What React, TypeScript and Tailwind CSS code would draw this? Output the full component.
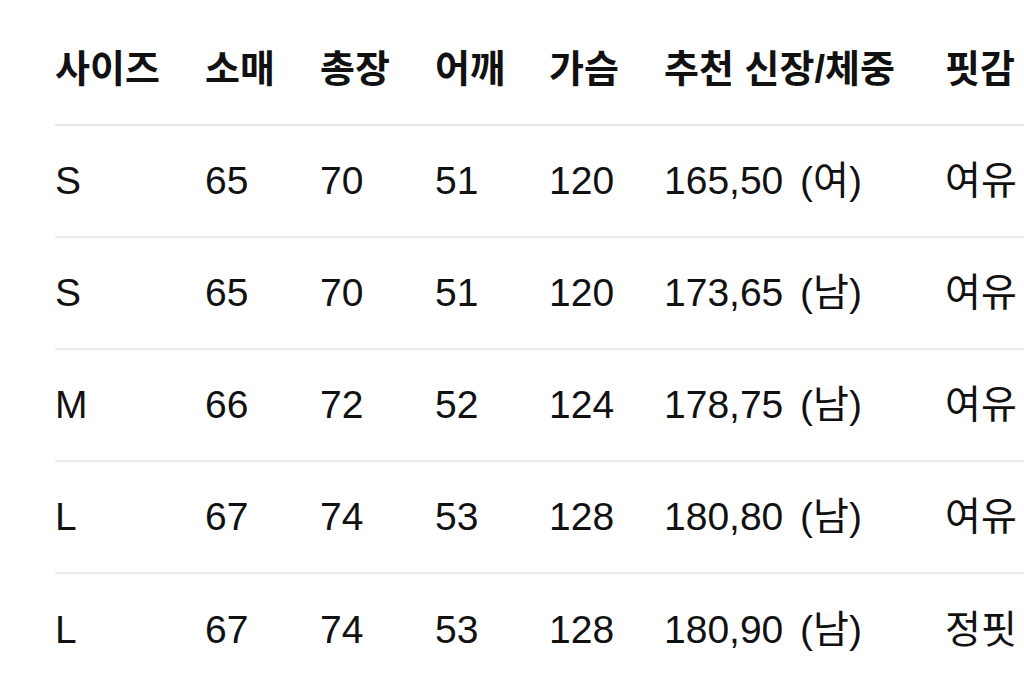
import React from "react";

const header = ["사이즈", "소매", "총장", "어깨", "가슴", "추천 신장/체중", "핏감"];
const rows = [
  ["S", "65", "70", "51", "120", "165,50 (여)", "여유"],
  ["S", "65", "70", "51", "120", "173,65 (남)", "여유"],
  ["M", "66", "72", "52", "124", "178,75 (남)", "여유"],
  ["L", "67", "74", "53", "128", "180,80 (남)", "여유"],
  ["L", "67", "74", "53", "128", "180,90 (남)", "정핏"],
];

const cols = "grid grid-cols-[150px_115px_115px_114px_115px_281px_200px]";

export default function App() {
  return (
    <div
      className="w-[1024px] h-[695px] overflow-hidden bg-white pt-[14px] pl-[55px] text-[#111111]"
      style={{ fontFamily: '"Liberation Sans", "Noto Sans CJK KR", sans-serif' }}
    >
      <div className="w-[1200px]">
        <div className={`${cols} h-[112px] items-center border-b-2 border-[#e6e6e6] text-[38px] font-bold`}>
          {header.map((h, i) => (
            <div key={i} className="whitespace-nowrap">{h}</div>
          ))}
        </div>
        {rows.map((r, ri) => (
          <div
            key={ri}
            className={`${cols} h-[112px] items-center text-[39px] [word-spacing:6px] ${ri < rows.length - 1 ? "border-b-2 border-[#ececec]" : ""}`}
          >
            {r.map((c, i) => (
              <div key={i} className="whitespace-nowrap">{c}</div>
            ))}
          </div>
        ))}
      </div>
    </div>
  );
}
